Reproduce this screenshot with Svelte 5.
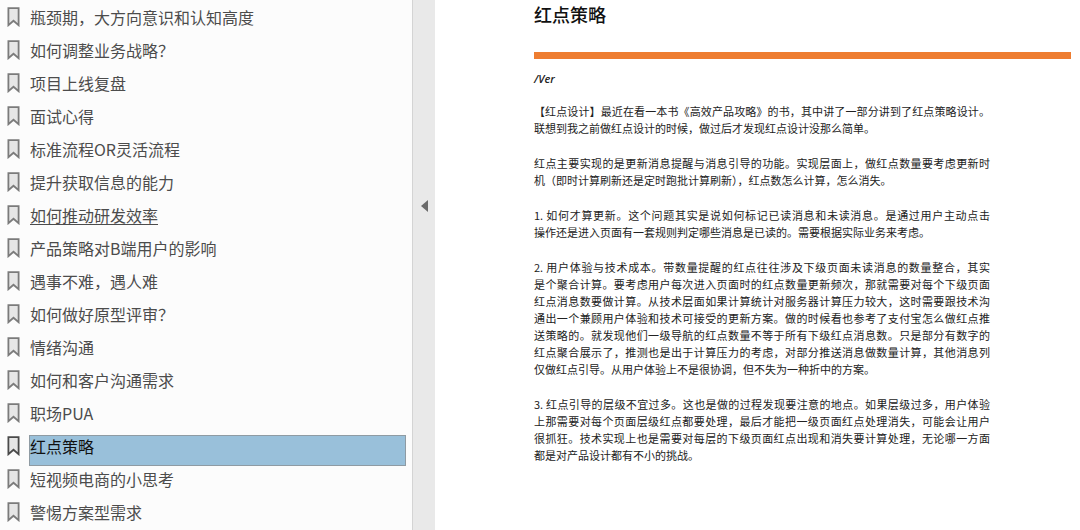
<script>
  const bookmarks = [
    '瓶颈期，大方向意识和认知高度',
    '如何调整业务战略？',
    '项目上线复盘',
    '面试心得',
    '标准流程OR灵活流程',
    '提升获取信息的能力',
    '如何推动研发效率',
    '产品策略对B端用户的影响',
    '遇事不难，遇人难',
    '如何做好原型评审？',
    '情绪沟通',
    '如何和客户沟通需求',
    '职场PUA',
    '红点策略',
    '短视频电商的小思考',
    '警惕方案型需求'
  ];
  const hovered = 6;
  let selected = $state(13);
  let open = $state(true);

  const paragraphs = [
    [
      '【红点设计】最近在看一本书《高效产品攻略》的书，其中讲了一部分讲到了红点策略设计。',
      '联想到我之前做红点设计的时候，做过后才发现红点设计没那么简单。'
    ],
    [
      '红点主要实现的是更新消息提醒与消息引导的功能。实现层面上，做红点数量要考虑更新时',
      '机（即时计算刷新还是定时跑批计算刷新），红点数怎么计算，怎么消失。'
    ],
    [
      '1. 如何才算更新。这个问题其实是说如何标记已读消息和未读消息。是通过用户主动点击',
      '操作还是进入页面有一套规则判定哪些消息是已读的。需要根据实际业务来考虑。'
    ],
    [
      '2. 用户体验与技术成本。带数量提醒的红点往往涉及下级页面未读消息的数量整合，其实',
      '是个聚合计算。要考虑用户每次进入页面时的红点数量更新频次，那就需要对每个下级页面',
      '红点消息数要做计算。从技术层面如果计算统计对服务器计算压力较大，这时需要跟技术沟',
      '通出一个兼顾用户体验和技术可接受的更新方案。做的时候看也参考了支付宝怎么做红点推',
      '送策略的。就发现他们一级导航的红点数量不等于所有下级红点消息数。只是部分有数字的',
      '红点聚合展示了，推测也是出于计算压力的考虑，对部分推送消息做数量计算，其他消息列',
      '仅做红点引导。从用户体验上不是很协调，但不失为一种折中的方案。'
    ],
    [
      '3. 红点引导的层级不宜过多。这也是做的过程发现要注意的地点。如果层级过多，用户体验',
      '上那需要对每个页面层级红点都要处理，最后才能把一级页面红点处理消失，可能会让用户',
      '很抓狂。技术实现上也是需要对每层的下级页面红点出现和消失要计算处理，无论哪一方面',
      '都是对产品设计都有不小的挑战。'
    ]
  ];
</script>

<div class="reader">
  {#if open}
    <nav aria-label="书签">
      <ul>
        {#each bookmarks as title, i}
          <li class:selected={i === selected}>
            <svg class="mark" viewBox="0 0 13 20" aria-hidden="true">
              <path d="M1.4 1.2H11.6V18.2L6.5 13.8L1.4 18.2Z" />
            </svg>
            <a
              href="#article"
              class:hovered={i === hovered}
              aria-current={i === selected ? 'true' : undefined}
              onclick={() => (selected = i)}>{title}</a>
          </li>
        {/each}
      </ul>
    </nav>
  {/if}

  <div class="divider">
    <button type="button" aria-label="折叠书签栏" aria-expanded={open} onclick={() => (open = !open)}>
      <svg viewBox="0 0 7 12" aria-hidden="true"><path d="M7 0V12L0 6Z" /></svg>
    </button>
  </div>

  <main id="article">
    <h1>红点策略</h1>
    <hr />
    <p class="author">/Ver</p>
    <div class="body">
      {#each paragraphs as lines}
        <p>
          {#each lines as line}<span>{line}</span>{/each}
        </p>
      {/each}
    </div>
  </main>
</div>

<style>
  :global(body) {
    background: #fff;
  }

  .reader {
    display: flex;
    min-height: 100vh;
    font-family: 'Noto Sans CJK SC', 'Noto Sans', sans-serif;
  }

  nav {
    flex: 0 1 412px;
    background: #fcfcfc;
  }

  ul {
    margin: 0;
    padding: 0;
    list-style: none;
  }

  li {
    display: flex;
    align-items: flex-start;
    gap: 9px;
    height: 33px;
    padding: 0 6px 0 7px;
    box-sizing: border-box;
  }

  .mark {
    flex: none;
    width: 13px;
    height: 20px;
    margin-top: 7px;
    fill: #e6e6e6;
    stroke: #7b7b7b;
    stroke-width: 1.8;
  }

  a {
    flex: 1;
    box-sizing: border-box;
    margin-top: 6px;
    border: 1px solid transparent;
    font-size: 16px;
    line-height: 20px;
    color: #4c4c4c;
    text-decoration: none;
    white-space: nowrap;
  }

  a.hovered {
    text-decoration: underline;
    text-decoration-thickness: 1px;
    text-underline-offset: 2px;
  }

  .selected .mark {
    stroke: #4a4a4a;
  }

  .selected a {
    height: 31px;
    border-color: #8f9ba3;
    background: #99c0da;
    color: #111;
  }

  .divider {
    flex: none;
    box-sizing: border-box;
    width: 23px;
    padding-top: 194px;
    border-left: 1px solid #d4d4d4;
    background: #e9e9e9;
  }

  button {
    display: flex;
    align-items: center;
    justify-content: center;
    width: 100%;
    height: 24px;
    padding: 0;
    border: 0;
    background: none;
  }

  button svg {
    width: 7px;
    height: 12px;
    fill: #6b6b6b;
  }

  main {
    flex: 1;
    min-width: 0;
    padding: 3px 9px 0 99px;
    color: #222;
  }

  h1 {
    margin: 0;
    font-size: 18px;
    line-height: 22px;
    font-weight: 500;
    color: #111;
  }

  hr {
    height: 7px;
    margin: 27px 0 0;
    border: 0;
    background: #ee7d31;
  }

  .author {
    margin: 11px 0 0;
    font-family: 'Open Sans', 'Noto Sans', sans-serif;
    font-size: 11px;
    line-height: 17px;
    font-style: italic;
    font-weight: 600;
  }

  .body {
    display: flex;
    flex-direction: column;
    gap: 18px;
    max-width: 456px;
    margin-top: 16px;
    font-size: 11px;
    line-height: 17px;
  }

  .body p {
    margin: 0;
  }

  .body span {
    display: block;
    text-align: justify;
    text-align-last: justify;
  }

  .body span:last-child {
    text-align-last: left;
  }
</style>
